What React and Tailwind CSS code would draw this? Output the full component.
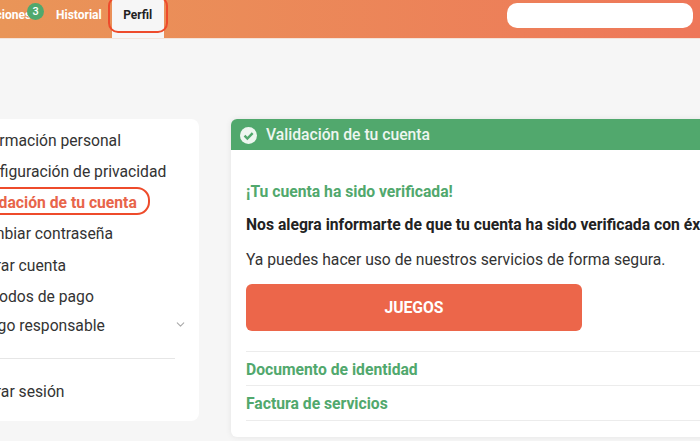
import { ChevronDown } from 'lucide-react'

const MENU = [
  'Información personal',
  'Configuración de privacidad',
  'Validación de tu cuenta',
  'Cambiar contraseña',
  'Cerrar cuenta',
  'Métodos de pago',
  'Juego responsable',
]

function Header() {
  return (
    <header className="relative flex h-[39px] items-start bg-gradient-to-r from-[#e99558] to-[#ee7759] border-b border-[#f3e3da]">
      <nav className="ml-[-47px] flex h-full items-start text-[12px] font-bold text-white">
        <a className="relative mt-[7px] leading-[16px]">
          Notificaciones
          <span className="absolute right-[-13px] top-[-4px] flex h-[17px] w-[17px] items-center justify-center rounded-full bg-[#51a86d] text-[11px] font-medium leading-none">3</span>
        </a>
        <a className="ml-[25px] mt-[7px] leading-[16px]">Historial</a>
        <div className="relative ml-[10px] h-[38px] w-[52px] bg-[#f6f6f6] text-center leading-[16px] text-[#222]">
          <span className="mt-[7px] block">Perfil</span>
          <span className="absolute inset-x-[-4px] top-[-4px] h-[37px] rounded-[10px] border-2 border-[#ee4b2b]" />
        </div>
      </nav>
      <div className="ml-auto mr-[7px] mt-[3px] h-[25px] w-[186px] rounded-[10px] bg-white" />
    </header>
  )
}

function Sidebar() {
  return (
    <aside className="ml-[-41px] h-[302px] w-[240px] shrink-0 rounded-lg bg-white pl-[13px] pr-[24px] pt-[5.6px] text-[15.7px] leading-[31.3px] text-[#333]">
      {MENU.map((item) => {
        if (item === 'Validación de tu cuenta') {
          return (
            <div key={item} className="relative font-bold text-[#e8654a]">
              {item}
              <span className="absolute bottom-[3px] left-[-12px] right-[25px] top-0 rounded-[13px] border-2 border-[#ee4b2b]" />
            </div>
          )
        }
        if (item === 'Juego responsable') {
          return (
            <div key={item} className="mr-[-12px] flex items-center justify-between leading-[28px]">
              {item}
              <ChevronDown className="mb-[4px] h-[13px] w-[13px] text-[#aaa]" />
            </div>
          )
        }
        return <div key={item}>{item}</div>
      })}
      <div className="mt-[18px] h-px bg-[#e6e6e6]" />
      <div className="mt-[17px]">Cerrar sesión</div>
    </aside>
  )
}

function CheckIcon() {
  return (
    <svg viewBox="0 0 18 18" className="h-[17px] w-[17px]">
      <circle cx="9" cy="9" r="9" fill="#eef6f0" />
      <path d="M4.8 9.2l3 3L13.4 6.6" fill="none" stroke="#51a86d" strokeWidth="2.6" />
    </svg>
  )
}

function Content() {
  return (
    <section className="ml-[32px] h-[318px] w-[560px] shrink-0 rounded-md bg-white shadow-[0_0_6px_rgba(0,0,0,0.08)]">
      <div className="flex h-[31px] items-center gap-[9px] rounded-t-md bg-[#51a86d] pl-[9px] pt-px text-[15.7px] font-medium text-[#eef6f0]">
        <CheckIcon />
        Validación de tu cuenta
      </div>
      <div className="pl-[15px] pr-[10px] pt-[32px]">
        <p className="text-[15.7px] font-bold leading-[20px] text-[#51a86d]">¡Tu cuenta ha sido verificada!</p>
        <p className="mt-[13px] whitespace-nowrap text-[15.7px] font-bold leading-[20px] text-[#222]">
          Nos alegra informarte de que tu cuenta ha sido verificada con éxito.
        </p>
        <p className="mt-[15px] text-[15.7px] leading-[20px] text-[#333]">
          Ya puedes hacer uso de nuestros servicios de forma segura.
        </p>
        <button className="mt-[14px] h-[47px] w-[336px] rounded-md bg-[#ec664a] pt-px text-[15.7px] font-bold text-white">
          JUEGOS
        </button>
        <div className="mt-[20px] border-t border-[#ececec] text-[15.7px] font-bold text-[#51a86d]">
          <div className="flex h-[33px] items-center pt-[2px]">Documento de identidad</div>
          <div className="flex h-[35px] items-center border-t border-[#ececec] pt-px">Factura de servicios</div>
          <div className="border-t border-[#ececec]" />
        </div>
      </div>
    </section>
  )
}

export default function App() {
  return (
    <div className="h-[441px] w-[700px] overflow-hidden bg-[#f6f6f6] font-['Roboto',sans-serif]">
      <Header />
      <main className="flex items-start pt-[80px]">
        <Sidebar />
        <Content />
      </main>
    </div>
  )
}
